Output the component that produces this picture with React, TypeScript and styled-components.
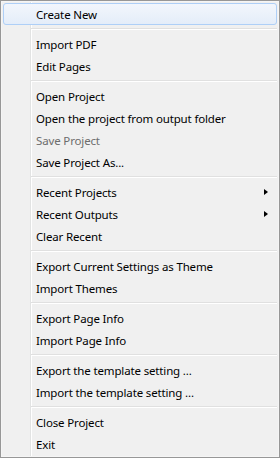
import styled, { createGlobalStyle } from 'styled-components'

const GlobalStyle = createGlobalStyle`
  html, body {
    margin: 0;
    padding: 0;
    background: #f0f0f0;
  }
`

const Menu = styled.div`
  box-sizing: border-box;
  width: 280px;
  height: 458px;
  padding: 2px;
  display: flex;
  flex-direction: column;
  border: 1px solid #979797;
  box-shadow: inset 0 0 0 1px #f5f5f5;
  background:
    linear-gradient(
      to right,
      transparent 29px,
      #e2e3e3 29px,
      #e2e3e3 30px,
      #ffffff 30px,
      #ffffff 31px,
      transparent 31px
    ),
    #f0f0f0;
  font-family: 'Segoe UI', 'Noto Sans', 'Liberation Sans', sans-serif;
  font-size: 11.5px;
  letter-spacing: -0.15px;
  color: #000;
`

const Item = styled.div<{ $active?: boolean; $disabled?: boolean }>`
  box-sizing: border-box;
  position: relative;
  height: 22px;
  display: flex;
  align-items: center;
  padding-left: 32px;
  border: 1px solid ${(p) => (p.$active ? '#aecff7' : 'transparent')};
  border-radius: 3px;
  background: ${(p) => (p.$active ? 'linear-gradient(to bottom, #f2f6fc, #e4edf9)' : 'transparent')};
  color: ${(p) => (p.$disabled ? '#6d6d6d' : '#000')};
  white-space: nowrap;
`

const Arrow = styled.span`
  position: absolute;
  right: 8px;
  top: 7px;
  width: 0;
  height: 0;
  border-top: 3.5px solid transparent;
  border-bottom: 3.5px solid transparent;
  border-left: 4px solid #000;
`

const Separator = styled.div`
  height: 8px;
  display: flex;
  align-items: center;
  padding-left: 28px;

  &::after {
    content: '';
    flex: 1;
    height: 0;
    border-top: 1px solid #e0e0e0;
    border-bottom: 1px solid #ffffff;
  }
`

type Entry = { label?: string; sub?: boolean; disabled?: boolean; active?: boolean } | 'sep'

const entries: Entry[] = [
  { label: 'Create New', active: true },
  'sep',
  { label: 'Import PDF' },
  { label: 'Edit Pages' },
  'sep',
  { label: 'Open Project' },
  { label: 'Open the project from output folder' },
  { label: 'Save Project', disabled: true },
  { label: 'Save Project As...' },
  'sep',
  { label: 'Recent Projects', sub: true },
  { label: 'Recent Outputs', sub: true },
  { label: 'Clear Recent' },
  'sep',
  { label: 'Export Current Settings as Theme' },
  { label: 'Import Themes' },
  'sep',
  { label: 'Export Page Info' },
  { label: 'Import Page Info' },
  'sep',
  { label: 'Export the template setting ...' },
  { label: 'Import the template setting ...' },
  'sep',
  { label: 'Close Project' },
  { label: 'Exit' },
]

export default function App() {
  return (
    <>
      <GlobalStyle />
      <Menu>
        {entries.map((e, i) =>
          e === 'sep' ? (
            <Separator key={i} />
          ) : (
            <Item key={i} $active={e.active} $disabled={e.disabled}>
              {e.label}
              {e.sub && <Arrow />}
            </Item>
          )
        )}
      </Menu>
    </>
  )
}
